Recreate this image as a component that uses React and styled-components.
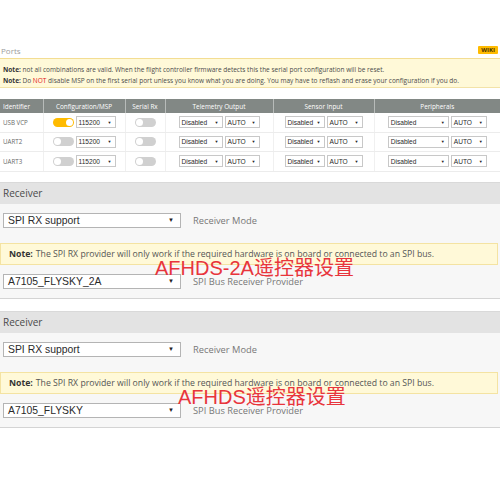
import React from 'react';
import styled, { createGlobalStyle } from 'styled-components';

const GlobalStyle = createGlobalStyle`
  html, body {
    margin: 0;
    padding: 0;
    background: #ffffff;
  }
  body {
    font-family: 'Open Sans', 'Liberation Sans', sans-serif;
    color: #444;
  }
`;

const ports = [
  { id: 'USB VCP', msp: true },
  { id: 'UART2', msp: false },
  { id: 'UART3', msp: false },
];

const receivers = [
  { provider: 'A7105_FLYSKY_2A', overlay: 'AFHDS-2A遥控器设置', left: 155 },
  { provider: 'A7105_FLYSKY', overlay: 'AFHDS遥控器设置', left: 178 },
];

const Toggle = ({ on }) => (
  <Switch on={on ? 1 : 0}>
    <Knob />
  </Switch>
);

const Select = ({ value, width, small }) => (
  <SelectBox style={{ width }} small={small ? 1 : 0}>
    <span>{value}</span>
    <Arrow small={small ? 1 : 0}>▼</Arrow>
  </SelectBox>
);

const App = () => {
  return (
    <>
      <GlobalStyle />
      <Page>
        <PortsHead>
          <PortsTitle>Ports</PortsTitle>
          <Wiki>WIKI</Wiki>
        </PortsHead>
        <PortsNote>
          <div>
            <b>Note:</b> not all combinations are valid. When the flight controller firmware detects this the serial port configuration will be reset.
          </div>
          <div>
            <b>Note:</b> Do <Red>NOT</Red> disable MSP on the first serial port unless you know what you are doing. You may have to reflash and erase your configuration if you do.
          </div>
        </PortsNote>

        <PortsTable>
          <colgroup>
            <col style={{ width: 43 }} />
            <col style={{ width: 82 }} />
            <col style={{ width: 40 }} />
            <col style={{ width: 108 }} />
            <col style={{ width: 101 }} />
            <col style={{ width: 126 }} />
          </colgroup>
          <thead>
            <tr>
              <Th left>Identifier</Th>
              <Th>Configuration/MSP</Th>
              <Th>Serial Rx</Th>
              <Th>Telemetry Output</Th>
              <Th>Sensor Input</Th>
              <Th>Peripherals</Th>
            </tr>
          </thead>
          <tbody>
            {ports.map((p) => (
              <tr key={p.id}>
                <IdCell>{p.id}</IdCell>
                <Td>
                  <Cell>
                    <Toggle on={p.msp} />
                    <Select value="115200" width={40} small />
                  </Cell>
                </Td>
                <Td>
                  <Cell>
                    <Toggle />
                  </Cell>
                </Td>
                <Td>
                  <Cell>
                    <Select value="Disabled" width={44} small />
                    <Select value="AUTO" width={35} small />
                  </Cell>
                </Td>
                <Td>
                  <Cell>
                    <Select value="Disabled" width={40} small />
                    <Select value="AUTO" width={36} small />
                  </Cell>
                </Td>
                <Td>
                  <Cell>
                    <Select value="Disabled" width={61} small />
                    <Select value="AUTO" width={36} small />
                  </Cell>
                </Td>
              </tr>
            ))}
          </tbody>
        </PortsTable>

        {receivers.map((r) => (
          <Section key={r.provider}>
            <SectionHead>Receiver</SectionHead>
            <SectionBody>
              <FieldRow>
                <Select value="SPI RX support" width={178} />
                <FieldLabel>Receiver Mode</FieldLabel>
              </FieldRow>
              <SpiNote>
                <b>Note:</b> The SPI RX provider will only work if the required hardware is on board or connected to an SPI bus.
              </SpiNote>
              <FieldRow>
                <Select value={r.provider} width={178} />
                <FieldLabel>SPI Bus Receiver Provider</FieldLabel>
              </FieldRow>
            </SectionBody>
            <Overlay left={r.left}>{r.overlay}</Overlay>
          </Section>
        ))}
      </Page>
    </>
  );
};

const Page = styled.div`
  width: 500px;
  padding-top: 44px;
`;

const PortsHead = styled.div`
  display: flex;
  justify-content: space-between;
  align-items: flex-end;
  height: 12px;
  padding-left: 1px;
`;

const PortsTitle = styled.span`
  font-size: 8px;
  line-height: 10px;
  color: #9c9c9c;
`;

const Wiki = styled.span`
  background: #ffbb00;
  color: #4a3300;
  font-weight: 700;
  font-size: 6px;
  line-height: 8px;
  padding: 0 3px;
  margin: 0 2px 2px 0;
  border-radius: 1px;
`;

const PortsNote = styled.div`
  margin-top: 2px;
  height: 30px;
  box-sizing: border-box;
  padding: 5px 3px 0;
  background: #fff9d8;
  border-top: 1px solid #f3dd92;
  border-bottom: 1px solid #f3e3a8;
  font-size: 6.5px;
  line-height: 11px;
  color: #4b4b4b;
  white-space: nowrap;

  b {
    font-weight: 700;
    color: #333;
  }
`;

const Red = styled.span`
  color: #e2231a;
`;

const PortsTable = styled.table`
  margin-top: 11px;
  width: 500px;
  table-layout: fixed;
  border-collapse: collapse;
  border-bottom: 1px solid #e6e6e6;
`;

const Th = styled.th`
  height: 14px;
  padding: 0 3px;
  background: #828885;
  color: #ffffff;
  font-size: 6.4px;
  font-weight: 400;
  text-align: ${(p) => (p.left ? 'left' : 'center')};
  border-right: 1px solid #b7bbb9;
  white-space: nowrap;

  &:last-child {
    border-right: none;
  }
`;

const Td = styled.td`
  height: 18.5px;
  padding: 0;
  border-bottom: 1px solid #ececec;
  border-right: 1px solid #f0f0f0;

  &:last-child {
    border-right: none;
  }
`;

const IdCell = styled(Td)`
  padding-left: 3px;
  font-size: 6.2px;
  color: #6a6a6a;
  white-space: nowrap;
`;

const Cell = styled.div`
  display: flex;
  justify-content: center;
  align-items: center;
  gap: 2px;
`;

const Switch = styled.span`
  display: inline-flex;
  justify-content: ${(p) => (p.on ? 'flex-end' : 'flex-start')};
  align-items: center;
  box-sizing: border-box;
  width: 21px;
  height: 9px;
  padding: 0 1px;
  border-radius: 5px;
  background: ${(p) => (p.on ? '#ffbb00' : '#d0d0d0')};
`;

const Knob = styled.span`
  width: 7px;
  height: 7px;
  border-radius: 50%;
  background: #ffffff;
`;

const SelectBox = styled.div`
  display: flex;
  justify-content: space-between;
  align-items: center;
  box-sizing: border-box;
  height: ${(p) => (p.small ? '12px' : '15px')};
  padding: ${(p) => (p.small ? '0 3px 0 2px' : '0 6px 0 4px')};
  background: #ffffff;
  border: 1px solid ${(p) => (p.small ? '#c8c8c8' : '#b4b4b4')};
  font-family: 'Liberation Sans', Arial, sans-serif;
  font-size: ${(p) => (p.small ? '6.6px' : '10.4px')};
  color: #2a2a2a;
  white-space: nowrap;
  overflow: hidden;
`;

const Arrow = styled.span`
  font-size: ${(p) => (p.small ? '4px' : '6px')};
  color: #222;
`;

const Section = styled.section`
  position: relative;
  margin-top: 10px;
  border-top: 1px solid #d9d9d9;
  border-bottom: 1px solid #d4d4d4;

  & + & {
    margin-top: 12px;
  }
`;

const SectionHead = styled.div`
  height: 21px;
  display: flex;
  align-items: center;
  padding-left: 3px;
  background: #e3e3e3;
  font-size: 10px;
  color: #4a4a4a;
`;

const SectionBody = styled.div`
  background: #f7f7f7;
  padding: 9px 0;
`;

const FieldRow = styled.div`
  display: flex;
  align-items: center;
  gap: 12px;
  padding-left: 3px;
`;

const FieldLabel = styled.span`
  font-size: 9.3px;
  color: #777;
`;

const SpiNote = styled.div`
  margin: 15px 2px 9px 0;
  height: 22px;
  box-sizing: border-box;
  display: flex;
  align-items: center;
  padding-left: 8px;
  background: #fff9d8;
  border: 1px solid #f4e3a2;
  font-size: 8.7px;
  color: #555;
  white-space: nowrap;

  b {
    font-weight: 700;
    color: #333;
    margin-right: 3px;
  }
`;

const Overlay = styled.div`
  position: absolute;
  top: 75px;
  left: ${(p) => p.left}px;
  font-family: 'Liberation Sans', 'Noto Sans CJK SC', sans-serif;
  font-size: 20px;
  line-height: 20px;
  color: #e8353c;
  white-space: nowrap;
  pointer-events: none;
`;

export default App;
